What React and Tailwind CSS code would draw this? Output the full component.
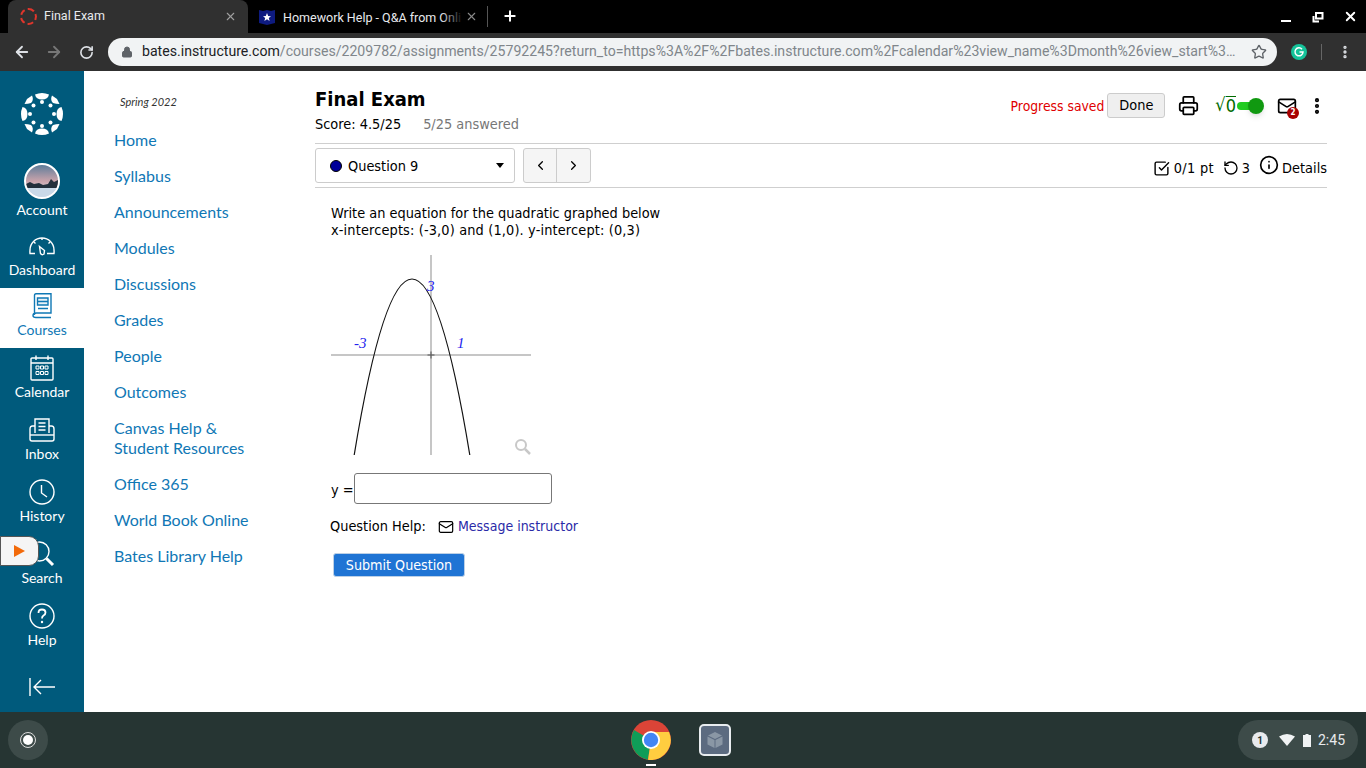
import React from "react";
import {
  ArrowLeft,
  ArrowRight,
  RotateCw,
  Lock,
  Star,
  X,
  Plus,
  MoreVertical,
  Printer,
  Mail,
  ChevronLeft,
  ChevronRight,
  SquareCheckBig,
  RotateCcw,
  Info,
} from "lucide-react";

const courseLinks = [
  "Home",
  "Syllabus",
  "Announcements",
  "Modules",
  "Discussions",
  "Grades",
  "People",
  "Outcomes",
  "Canvas Help & Student Resources",
  "Office 365",
  "World Book Online",
  "Bates Library Help",
];

const CanvasLogo = () => (
  <svg width="44" height="44" viewBox="0 0 44 44" fill="currentColor">
    <path d="M15 2.5 Q22 -0.5 29 2.5 Q28 7.5 22 7.5 Q16 7.5 15 2.5Z" />
    <path d="M15 41.5 Q22 44.5 29 41.5 Q28 36.5 22 36.5 Q16 36.5 15 41.5Z" />
    <path d="M2.5 15 Q-0.5 22 2.5 29 Q7.5 28 7.5 22 Q7.5 16 2.5 15Z" />
    <path d="M41.5 15 Q44.5 22 41.5 29 Q36.5 28 36.5 22 Q36.5 16 41.5 15Z" />
    <path d="M7 7 L12 3.5 Q14 8 11 11 Q8 12 4.5 12Z" />
    <path d="M37 7 L32 3.5 Q30 8 33 11 Q36 12 39.5 12Z" />
    <path d="M7 37 L12 40.5 Q14 36 11 33 Q8 32 4.5 32Z" />
    <path d="M37 37 L32 40.5 Q30 36 33 33 Q36 32 39.5 32Z" />
    <circle cx="22" cy="10" r="2" />
    <circle cx="22" cy="34" r="2" />
    <circle cx="10" cy="22" r="2" />
    <circle cx="34" cy="22" r="2" />
    <circle cx="13.5" cy="13.5" r="2" />
    <circle cx="30.5" cy="13.5" r="2" />
    <circle cx="13.5" cy="30.5" r="2" />
    <circle cx="30.5" cy="30.5" r="2" />
  </svg>
);

const DashboardIcon = () => (
  <svg width="26" height="20" viewBox="0 0 26 20" fill="none" stroke="currentColor" strokeWidth="1.4">
    <path d="M6 17.5 H1 Q0.8 16 1 14 A12 12 0 0 1 25 14 Q25.2 16 25 17.5 H18" />
    <path d="M10.5 10.5 L15.5 14.5 L15 18 Q13 19.5 11.5 17.5Z" />
    <path d="M13 2v2M5 6l1.5 1.5M21 6l-1.5 1.5" />
  </svg>
);

const CoursesIcon = () => (
  <svg width="20" height="26" viewBox="0 0 20 26" fill="none" stroke="currentColor" strokeWidth="1.4">
    <path d="M2.5 22 V2.5 Q2.5 0.8 4 0.8 H19 V20 H4.5 Q1 20 1 22.5 Q1 24.5 4 24.5 H19" />
    <path d="M5.5 5 H16 V12 H5.5Z" fill="currentColor" fillOpacity="0.1" />
    <path d="M6 15.5 H16 M6 8.5 H16" />
  </svg>
);

const CalendarIcon = () => (
  <svg width="24" height="26" viewBox="0 0 24 26" fill="none" stroke="currentColor" strokeWidth="1.4">
    <rect x="1" y="3" width="22" height="22" rx="1" />
    <path d="M1 8 H23 M6 0.5 V5 M18 0.5 V5" />
    <path
      d="M6 11h3v3h-3zM10.5 11h3v3h-3zM15 11h3v3h-3zM6 16.5h3v3h-3zM10.5 16.5h3v3h-3zM15 16.5h3v3h-3z"
      strokeWidth="1"
    />
  </svg>
);

const InboxIcon = () => (
  <svg width="26" height="24" viewBox="0 0 26 24" fill="none" stroke="currentColor" strokeWidth="1.4">
    <path d="M6 15 V1 H20 V15" />
    <path d="M9.5 5 H16.5 M9.5 8.5 H16.5 M9.5 12 H16.5" />
    <path d="M6 8 H3.5 Q1 8 1 11 V21 Q1 23 3 23 H23 Q25 23 25 21 V11 Q25 8 22.5 8 H20" />
    <path d="M1 17 H25" />
  </svg>
);

const ClockIcon = () => (
  <svg width="26" height="26" viewBox="0 0 26 26" fill="none" stroke="currentColor" strokeWidth="1.4">
    <circle cx="13" cy="13" r="12" />
    <path d="M12.5 6 V14 L18 18" />
  </svg>
);

const SearchIcon = () => (
  <svg width="26" height="26" viewBox="0 0 26 26" fill="none" stroke="currentColor" strokeWidth="1.4">
    <circle cx="10.5" cy="10.5" r="9.5" />
    <path d="M17.5 17.5 L24 24" strokeWidth="3" />
  </svg>
);

const HelpIcon = () => (
  <svg width="26" height="26" viewBox="0 0 26 26" fill="none" stroke="currentColor" strokeWidth="1.4">
    <circle cx="13" cy="13" r="12" />
    <path d="M9.5 10 Q9.5 6.5 13 6.5 Q16.5 6.5 16.5 9.5 Q16.5 11.5 14.5 12.5 Q13 13.5 13 15.5" strokeWidth="1.8" />
    <circle cx="13" cy="19" r="1.2" fill="currentColor" stroke="none" />
  </svg>
);

const CollapseIcon = () => (
  <svg width="26" height="18" viewBox="0 0 26 18" fill="none" stroke="currentColor" strokeWidth="1.4">
    <path d="M1 0 V18" />
    <path d="M26 9 H5 M12 2 L5 9 L12 16" />
  </svg>
);

const Avatar = () => (
  <div className="relative -mt-[10px] h-9 w-9 overflow-hidden rounded-full border-2 border-white bg-gradient-to-b from-[#5d7c99] via-[#c9a3ab] to-[#dfe9f2]">
    <svg className="absolute inset-0" width="32" height="32" viewBox="0 0 32 32">
      <path d="M0 19 L4 17 L8 19 L13 18 L17 20 L22 19 L25 14 L28 17 L32 15 V23 H0Z" fill="#23303c" />
      <path d="M0 23 H32 V32 H0Z" fill="#c9d9e8" />
    </svg>
  </div>
);

const navItems = [
  { label: "Account", icon: <Avatar />, cls: "h-[70px]" },
  { label: "Dashboard", icon: <DashboardIcon />, cls: "h-[60px]" },
  { label: "Courses", icon: <CoursesIcon />, cls: "h-[60px] bg-white text-[#0f78b5]" },
  { label: "Calendar", icon: <CalendarIcon />, cls: "h-[62px]" },
  { label: "Inbox", icon: <InboxIcon />, cls: "h-[62px]" },
  { label: "History", icon: <ClockIcon />, cls: "h-[62px]" },
  { label: "Search", icon: <SearchIcon />, cls: "h-[62px]" },
  { label: "Help", icon: <HelpIcon />, cls: "h-[62px]" },
];

const Graph = () => (
  <svg width="200" height="200" viewBox="0 0 200 200" fill="none">
    <path d="M0 100 H200 M100 0 V200" stroke="#b4b4b4" strokeWidth="1.5" />
    <path d="M96.5 100 H103.5 M100 96.5 V103.5" stroke="#555" strokeWidth="1" />
    <path d="M23.2 200 Q81 -152 138.8 200" stroke="#111" strokeWidth="1.2" />
    <g fill="#2222ee" fontFamily="'Liberation Serif', serif" fontStyle="italic" fontSize="15">
      <text x="23" y="93">-3</text>
      <text x="126" y="93">1</text>
      <text x="96" y="36">3</text>
    </g>
    <circle cx="190" cy="190" r="5" stroke="#c8c8c8" strokeWidth="2" />
    <path d="M194 194 L199 199" stroke="#c8c8c8" strokeWidth="2.5" />
  </svg>
);

const ChromeLogo = () => (
  <svg width="40" height="40" viewBox="0 0 40 40">
    <circle cx="20" cy="20" r="20" fill="#db4437" />
    <path d="M20 20 L3 10 A20 20 0 0 0 17 39.8Z" fill="#0f9d58" />
    <path d="M20 12 H38 A20 20 0 0 1 17 39.8 L20 20Z" fill="#ffcd40" />
    <circle cx="20" cy="20" r="9" fill="#fff" />
    <circle cx="20" cy="20" r="7.2" fill="#4285f4" />
  </svg>
);

export default function App() {
  return (
    <div className="relative flex h-[768px] w-[1366px] flex-col overflow-hidden bg-white [font-family:Roboto,sans-serif]">
      {/* TAB STRIP */}
      <div className="flex h-[33px] shrink-0 items-end bg-black pl-2 text-white">
        <div className="flex h-[33px] w-[240px] items-center rounded-t-lg bg-[#303030] pl-3 pr-[11px]">
          <div className="h-[17px] w-[17px] rounded-full border-2 border-dashed border-[#e0362c]" />
          <span className="ml-[7px] flex-1 text-[12.5px] text-[#e8eaed]">Final Exam</span>
          <X size={13} className="text-[#a0a0a0]" />
        </div>
        <div className="flex h-[33px] w-[239px] items-center pl-[11px] pr-[13px]">
          <svg width="16" height="16" viewBox="0 0 16 16" className="shrink-0">
            <path d="M0 1 L4 2 L8 1 L12 2 L16 1 V14 L8 16 L0 14Z" fill="#0e1b80" />
            <path d="M8 4 L9.2 7 L12 7.2 L9.8 9 L10.6 12 L8 10.3 L5.4 12 L6.2 9 L4 7.2 L6.8 7 Z" fill="#fff" />
          </svg>
          <div className="relative ml-2 flex-1">
            <span className="whitespace-nowrap text-[12.5px] text-[#e8eaed]">Homework Help - Q&amp;A from Onli</span>
            <div className="absolute -right-[2px] top-0 h-full w-[22px] bg-gradient-to-r from-transparent to-black" />
          </div>
          <X size={13} className="ml-1 shrink-0 text-[#8a8a8a]" />
        </div>
        <div className="mb-[6px] h-[21px] w-px bg-[#555]" />
        <Plus size={16} strokeWidth={3} className="mb-[9px] ml-[14px]" />
        <div className="mb-[9px] ml-auto flex items-center">
          <div className="flex w-8 justify-center">
            <div className="mt-[8px] h-[2px] w-[10px] bg-white" />
          </div>
          <div className="flex w-8 justify-center">
            <svg width="12" height="12" viewBox="0 0 12 12" fill="none" stroke="#fff" strokeWidth="2">
              <path d="M4 2 H10.5 V7.5 H4Z" />
              <path d="M1.5 5 V10.5 H7" />
            </svg>
          </div>
          <div className="flex w-8 justify-center">
            <X size={15} strokeWidth={3} />
          </div>
        </div>
      </div>

      {/* TOOLBAR */}
      <div className="flex h-[38px] shrink-0 items-center bg-[#303030] pl-[13px] text-[#dee1e6]">
        <ArrowLeft size={18} strokeWidth={2.4} />
        <ArrowRight size={18} strokeWidth={2.4} className="ml-[14px] text-[#777]" />
        <RotateCw size={15} strokeWidth={2.6} className="ml-[16px]" />
        <div className="ml-[14px] flex h-[28px] w-[1169px] items-center rounded-full bg-[#f1f3f4] pl-[13px] pr-[10px]">
          <Lock size={12} fill="#5f6368" className="shrink-0 text-[#5f6368]" />
          <div className="ml-[9px] whitespace-nowrap text-[14.12px] text-[#80868b]">
            <span className="text-[#202124]">bates.instructure.com</span>
            /courses/2209782/assignments/25792245?return_to=https%3A%2F%2Fbates.instructure.com%2Fcalendar%23view_name%3Dmonth%26view_start%3…
          </div>
          <Star size={16} className="ml-auto shrink-0 text-[#5f6368]" />
        </div>
        <svg width="16" height="16" viewBox="0 0 16 16" fill="none" className="ml-[14px]">
          <circle cx="8" cy="8" r="8" fill="#15c39a" />
          <path d="M11 5.2 A4 4 0 1 0 12 8 H8.5" stroke="#fff" strokeWidth="1.5" />
        </svg>
        <div className="ml-[14px] h-[16px] w-px bg-[#666]" />
        <MoreVertical size={16} strokeWidth={3} className="ml-[15px]" />
      </div>

      {/* PAGE */}
      <div className="flex min-h-0 flex-1">
        {/* GLOBAL NAV */}
        <div className="flex w-[84px] shrink-0 flex-col items-stretch bg-[#005a7c] text-white [font-family:Lato,sans-serif]">
          <div className="flex h-[87px] shrink-0 justify-center pt-[21px]">
            <CanvasLogo />
          </div>
          <div>
            {navItems.map((item) => (
              <div key={item.label} className={`flex flex-col items-center justify-end pb-[9px] ${item.cls}`}>
                <div className="flex h-[30px] items-center">{item.icon}</div>
                <span className="text-[14px] leading-[18px]">{item.label}</span>
              </div>
            ))}
          </div>
          <div className="mt-5 flex justify-center">
            <CollapseIcon />
          </div>
        </div>

        {/* COURSE NAV */}
        <div className="w-[231px] shrink-0 pl-[30px] pt-[23px] [font-family:Lato,sans-serif]">
          <div className="pl-[6px] text-[11px] italic leading-4 text-[#333]">Spring 2022</div>
          <ul className="mt-[20px] flex flex-col gap-4 text-[16px] leading-5 text-[#1077b5]">
            {courseLinks.map((link) => (
              <li key={link} className="w-[150px]">
                {link}
              </li>
            ))}
          </ul>
        </div>

        {/* CONTENT */}
        <div className="relative w-[1012px] shrink-0 pt-[14px] text-[14.4px] text-black [font-family:'DejaVu_Sans_Condensed','DejaVu_Sans',sans-serif]">
          <div className="flex h-[59px] items-start justify-between border-b border-[#cfcfcf]">
            <div>
              <h1 className="text-[20px] font-bold leading-[28px]">Final Exam</h1>
              <div className="mt-[2px] leading-[19px]">
                Score: 4.5/25<span className="ml-[22px] text-[#777]">5/25 answered</span>
              </div>
            </div>
            <div className="flex items-center pt-[8px]">
              <span className="pt-[1px] text-[13.8px] text-[#e00000]">Progress saved</span>
              <div className="ml-[3px] flex h-[25px] w-[58px] items-center justify-center rounded-[3px] border border-[#ccc] bg-[#efefef]">
                Done
              </div>
              <Printer size={21} strokeWidth={2} className="ml-[13px]" />
              <span className="ml-[16px] flex items-start text-[18px] leading-none text-[#006b00]">
                √<span className="border-t border-[#006b00]">0</span>
              </span>
              <div className="relative ml-[1px] h-[8px] w-[24px] rounded-full bg-[#22cc22]">
                <div className="absolute -right-[3px] -top-[4px] h-4 w-4 rounded-full bg-[#109910] shadow-md" />
              </div>
              <div className="relative ml-[16px]">
                <Mail size={20} strokeWidth={2} />
                <div className="absolute -bottom-[3px] -right-[2px] flex h-3 w-3 items-center justify-center rounded-full bg-[#a80000] text-[8px] font-bold text-white">
                  2
                </div>
              </div>
              <MoreVertical size={20} strokeWidth={3} className="ml-[10px]" />
            </div>
          </div>

          <div className="flex h-[44px] items-center justify-between border-b border-[#cfcfcf]">
            <div className="flex items-center">
              <div className="flex h-[35px] w-[200px] items-center rounded-[3px] border border-[#ccc] pl-[14px] pr-[10px]">
                <div className="h-3 w-3 rounded-full border border-black bg-[#000099]" />
                <span className="ml-[6px] flex-1 pt-[2px]">Question 9</span>
                <div className="h-0 w-0 border-x-[4px] border-t-[5px] border-x-transparent border-t-black" />
              </div>
              <div className="ml-2 flex h-[35px] w-[68px] rounded-[3px] border border-[#ccc] bg-[#f5f5f5]">
                <div className="flex w-[33px] items-center justify-center border-r border-[#ccc]">
                  <ChevronLeft size={15} strokeWidth={2} />
                </div>
                <div className="flex flex-1 items-center justify-center">
                  <ChevronRight size={15} strokeWidth={2} />
                </div>
              </div>
            </div>
            <div className="flex items-center pt-[6px]">
              <SquareCheckBig size={17} strokeWidth={2} />
              <span className="ml-[4px] tracking-[0.3px]">0/1 pt</span>
              <RotateCcw size={16} strokeWidth={2} className="ml-[9px]" />
              <span className="ml-[3px]">3</span>
              <Info size={20} strokeWidth={2} className="-mt-[6px] ml-[9px]" />
              <span className="ml-[3px]">Details</span>
            </div>
          </div>

          <div className="pl-4 pt-[17px] leading-[17px]">
            <p>Write an equation for the quadratic graphed below</p>
            <p className="tracking-[0.14px]">x-intercepts: (-3,0) and (1,0). y-intercept: (0,3)</p>
            <div className="mt-[16px]">
              <Graph />
            </div>
            <div className="mt-[18px] flex items-center">
              <span className="pt-[3px]">y =</span>
              <div className="h-[31px] w-[198px] rounded-[3px] border border-[#777] bg-white" />
            </div>
            <div className="mt-[14px] flex items-center">
              <span className="-ml-px">Question Help:</span>
              <Mail size={16} strokeWidth={1.8} className="ml-[12px]" />
              <span className="ml-[4px] text-[14px] text-[#2a2aa8]">Message instructor</span>
            </div>
            <div className="ml-[2px] mt-[18px] flex h-[24px] w-[132px] items-center justify-center rounded-[3px] border border-[#bcd0e6] bg-[#1f74d4] text-[14.2px] text-white">
              Submit Question
            </div>
          </div>
        </div>
      </div>

      {/* SHELF */}
      <div className="relative flex h-[56px] shrink-0 items-center bg-[#263533]">
        <div className="ml-2 flex h-10 w-10 items-center justify-center rounded-full bg-[#3d4b49]">
          <div className="flex h-4 w-4 items-center justify-center rounded-full border border-[#ddd]">
            <div className="h-[10px] w-[10px] rounded-full bg-white" />
          </div>
        </div>
        <div className="ml-[583px] flex flex-col items-center">
          <ChromeLogo />
        </div>
        <div className="ml-[28px] flex h-8 w-8 items-center justify-center rounded-[5px] border-2 border-[#e8ecef] bg-[#5c6b80]">
          <svg width="18" height="18" viewBox="0 0 18 18" fill="#8a97a5">
            <path d="M9 1 L16 4.5 L9 8 L2 4.5Z" />
            <path d="M1.5 5.5 L8.5 9 V17 L1.5 13.5Z" />
            <path d="M16.5 5.5 L9.5 9 V17 L16.5 13.5Z" />
          </svg>
        </div>
        <div className="absolute bottom-[2px] left-[646px] h-[2px] w-[10px] bg-white" />
        <div className="ml-auto mr-[8px] flex h-10 w-[120px] items-center rounded-full bg-[#3d4b49] pl-[14px] text-[#e8eaed]">
          <div className="flex h-4 w-4 items-center justify-center rounded-full bg-[#e8eaed] text-[10px] font-bold text-[#263533]">
            1
          </div>
          <svg width="16" height="12" viewBox="0 0 16 12" className="ml-[11px]" fill="#f1f3f4">
            <path d="M0 2.5 Q8 -2.5 16 2.5 L8 12Z" />
          </svg>
          <svg width="8" height="13" viewBox="0 0 8 13" className="ml-[8px]" fill="#f1f3f4">
            <path d="M2.5 0 H5.5 V1 H8 V13 H0 V1 H2.5Z" />
          </svg>
          <span className="ml-[7px] text-[14px]">2:45</span>
        </div>
      </div>

      {/* RECORDER TAB */}
      <div className="absolute left-0 top-[536px] flex h-[30px] w-[39px] items-center rounded-r-[10px] border border-[#555] bg-[#f5f5f5] pl-[13px]">
        <div className="h-0 w-0 border-y-[6px] border-l-[11px] border-y-transparent border-l-[#f26a0a]" />
      </div>
    </div>
  );
}
